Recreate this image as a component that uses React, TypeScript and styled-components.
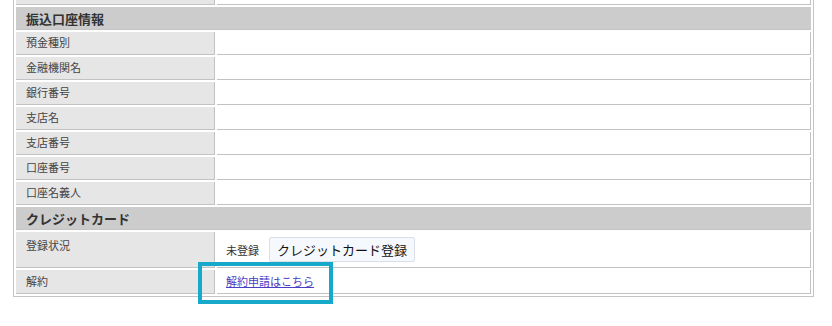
import { createGlobalStyle } from 'styled-components'
import styled from 'styled-components'

const GlobalStyle = createGlobalStyle`
  html, body {
    margin: 0;
    padding: 0;
    background: #ffffff;
  }
  body {
    font-family: 'Liberation Sans', 'Noto Sans CJK JP', sans-serif;
    color: #333333;
  }
`

type RowSize = 'cut' | 'normal' | 'tall' | 'last'

const heights: Record<RowSize, string> = {
  cut: '5px',
  normal: '23px',
  tall: '36px',
  last: '24px',
}

const bankRows = ['預金種別', '金融機関名', '銀行番号', '支店名', '支店番号', '口座番号', '口座名義人']

export default function App() {
  return (
    <>
      <GlobalStyle />
      <Page>
        <InfoTable>
          <LabelCell $size="cut" />
          <DataCell $size="cut" />

          <SectionHeader>振込口座情報</SectionHeader>
          {bankRows.map((label) => (
            <EmptyRow key={label} label={label} />
          ))}

          <SectionHeader>クレジットカード</SectionHeader>
          <LabelCell $size="tall">登録状況</LabelCell>
          <DataCell $size="tall">
            <StatusText>未登録</StatusText>
            <RegisterButton type="button">クレジットカード登録</RegisterButton>
          </DataCell>

          <LabelCell $size="last">解約</LabelCell>
          <DataCell $size="last">
            <CancelLink href="#">解約申請はこちら</CancelLink>
            <Highlight />
          </DataCell>
        </InfoTable>
      </Page>
    </>
  )
}

function EmptyRow({ label }: { label: string }) {
  return (
    <>
      <LabelCell $size="normal">{label}</LabelCell>
      <DataCell $size="normal" />
    </>
  )
}

const Page = styled.div`
  min-height: 326px;
  box-sizing: border-box;
  padding: 0 0 24px 13px;
`

const InfoTable = styled.div`
  box-sizing: border-box;
  width: 801px;
  display: grid;
  grid-template-columns: 199px 1fr;
  gap: 2px;
  padding: 0 2px 2px 2px;
  border: 1px solid #c4c4c4;
  border-top: none;
`

const LabelCell = styled.div<{ $size: RowSize }>`
  box-sizing: border-box;
  height: ${(p) => heights[p.$size]};
  padding: ${(p) => (p.$size === 'tall' ? '6px 10px 0' : '0 10px')};
  display: flex;
  align-items: ${(p) => (p.$size === 'tall' ? 'flex-start' : 'center')};
  background: #e6e6e6;
  border-right: 1px solid #c2c2c2;
  border-bottom: 1px solid #c2c2c2;
  font-size: 11px;
  line-height: 16px;
  color: #444444;
`

const DataCell = styled.div<{ $size: RowSize }>`
  position: relative;
  box-sizing: border-box;
  height: ${(p) => heights[p.$size]};
  padding: ${(p) => (p.$size === 'tall' ? '5px 9px 5px' : '0 9px')};
  display: flex;
  align-items: ${(p) => (p.$size === 'tall' ? 'flex-end' : 'center')};
  gap: 10px;
  background: #ffffff;
  border-right: 1px solid #c2c2c2;
  border-bottom: 1px solid #c2c2c2;
  font-size: 11px;
`

const SectionHeader = styled.div`
  grid-column: 1 / -1;
  box-sizing: border-box;
  height: 23px;
  padding: 0 10px;
  display: flex;
  align-items: center;
  background: #cccccc;
  border-bottom: 1px solid #c4c4c4;
  font-size: 13px;
  font-weight: bold;
  color: #333333;
`

const StatusText = styled.span`
  font-size: 11px;
  line-height: 16px;
  padding-bottom: 3px;
  color: #333333;
`

const RegisterButton = styled.button`
  box-sizing: border-box;
  height: 25px;
  padding: 0 7px;
  margin: 0;
  background: #f5f8fc;
  border: 1px solid #d8dfe8;
  border-radius: 2px;
  font-family: 'Liberation Sans', 'Noto Sans CJK JP', sans-serif;
  font-size: 13px;
  color: #111111;
  cursor: pointer;
`

const CancelLink = styled.a`
  font-size: 11px;
  line-height: 16px;
  color: #4a3ec2;
  text-decoration: underline;
`

const Highlight = styled.div`
  position: absolute;
  left: -19px;
  top: -8px;
  width: 135px;
  height: 42px;
  box-sizing: border-box;
  border: 4px solid #17a9ca;
  pointer-events: none;
  z-index: 1;
`
